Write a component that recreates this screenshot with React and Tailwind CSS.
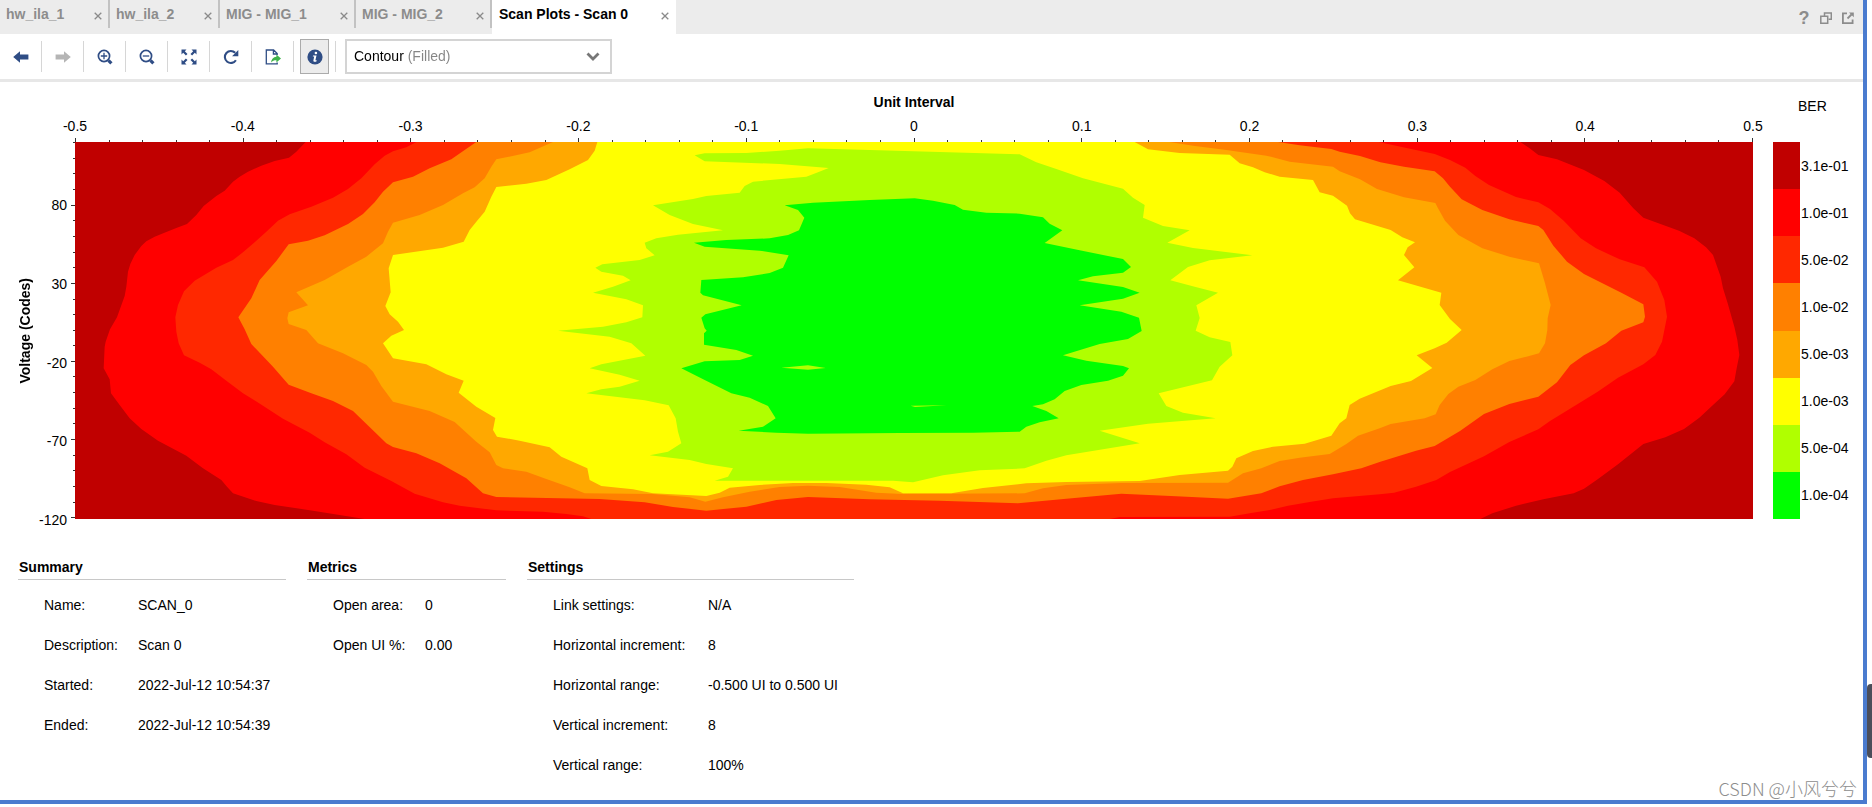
import React from "react";

const X_LABELS = ["-0.5", "-0.4", "-0.3", "-0.2", "-0.1", "0", "0.1", "0.2", "0.3", "0.4", "0.5"];
const Y_LABELS = ["80", "30", "-20", "-70", "-120"];

const LEGEND = [
  { label: "3.1e-01", color: "bg-[#c00000]" },
  { label: "1.0e-01", color: "bg-[#ff0000]" },
  { label: "5.0e-02", color: "bg-[#ff2800]" },
  { label: "1.0e-02", color: "bg-[#ff8000]" },
  { label: "5.0e-03", color: "bg-[#ffa800]" },
  { label: "1.0e-03", color: "bg-[#ffff00]" },
  { label: "5.0e-04", color: "bg-[#b0ff00]" },
  { label: "1.0e-04", color: "bg-[#00ff00]" },
];

// Contour outlines, from the outermost BER level to the innermost.
const CONTOURS = [
  {
    color: "#ff0000",
    points:
      "692,0 664,29 642,47 599,57 559,71 519,89 494,104 474,119 449,146 424,162 386,192 364,219 336,246 304,258 274,270 239,284 214,298 199,312 179,339 166,366 159,389 154,434 149,462 126,526 105,562 92,599 89,614 86,679 104,712 108,754 134,789 164,829 199,861 249,896 334,941 384,979 439,1014 456,1034 474,1054 544,1077 599,1089 714,1106 869,1131 4216,1131 4252,1114 4323,1091 4405,1072 4496,1054 4527,1040 4568,1012 4629,967 4705,906 4771,886 4827,861 4873,827 4914,789 4949,757 4978,718 4985,679 4993,639 4987,594 4978,554 4958,484 4944,439 4937,404 4914,339 4893,316 4858,289 4812,266 4705,227 4675,199 4634,152 4588,117 4527,84 4446,52 4390,39 4364,19 4336,0",
  },
  {
    color: "#ff2800",
    points:
      "1024,0 994,16 954,28 929,41 899,67 859,109 819,141 774,167 709,194 644,217 609,236 574,269 539,301 504,331 474,354 424,377 359,416 327,448 309,489 301,526 304,569 311,604 327,640 374,662 409,682 454,716 504,754 564,791 624,830 704,872 749,901 814,937 869,977 949,1017 1019,1055 1104,1081 1154,1091 1264,1105 1404,1109 1474,1116 1524,1123 1549,1131 3104,1131 3134,1125 3464,1124 3524,1114 3584,1104 3639,1091 3704,1080 3774,1069 3914,1057 3957,1052 4023,1034 4084,1014 4125,990 4227,943 4303,900 4390,862 4425,837 4507,787 4568,749 4629,707 4705,667 4741,639 4761,599 4776,524 4768,474 4746,419 4708,376 4634,352 4563,319 4517,289 4466,236 4425,201 4390,181 4323,165 4242,129 4201,102 4171,77 4125,54 4079,36 3977,14 3911,0",
  },
  {
    color: "#ff8000",
    points:
      "1204,0 1169,24 1129,52 1064,79 1014,104 954,121 924,149 899,181 864,216 819,246 749,280 699,296 641,307 604,357 554,414 529,469 490,526 509,562 529,606 594,674 641,728 709,754 774,777 834,807 869,841 934,904 954,915 1024,934 1094,964 1174,1009 1224,1054 1264,1065 1574,1071 1709,1081 1794,1095 1894,1106 2014,1094 2104,1074 2199,1065 2384,1072 2594,1076 2829,1084 2974,1070 3139,1055 3304,1063 3459,1070 3559,1054 3614,1033 3684,1014 3774,997 3859,979 3916,959 4023,926 4079,912 4155,867 4227,816 4303,786 4390,764 4446,721 4486,669 4527,640 4593,604 4639,566 4705,541 4710,524 4705,487 4639,452 4527,396 4476,359 4435,311 4405,264 4390,252 4303,232 4222,204 4160,172 4125,134 4104,109 4079,88 3987,74 3916,61 3855,42 3794,29 3769,21 3674,10 3609,0",
  },
  {
    color: "#ffa800",
    points:
      "1434,0 1364,31 1264,52 1249,74 1229,109 1199,136 1164,154 1104,189 1034,219 954,242 939,269 924,304 874,344 819,374 749,414 664,451 699,490 641,511 637,529 641,546 694,564 729,604 804,634 874,669 894,689 919,732 954,779 1064,807 1139,840 1204,899 1244,931 1264,969 1284,979 1354,989 1414,1011 1484,1036 1529,1054 1734,1056 1844,1066 1891,1079 1944,1066 2024,1049 2114,1035 2199,1031 2294,1035 2404,1052 2484,1056 2849,1054 2904,1039 2974,1029 3139,1023 3459,1022 3504,994 3559,979 3614,957 3674,947 3764,936 3814,906 3849,881 3914,859 3947,846 4049,829 4082,817 4094,789 4120,756 4150,734 4201,714 4252,682 4303,657 4354,644 4392,634 4410,604 4417,564 4418,529 4427,489 4410,424 4392,364 4303,344 4222,319 4150,279 4110,236 4089,199 4081,183 3987,166 3906,141 3855,112 3794,88 3774,74 3644,59 3574,41 3454,24 3354,11 3284,0",
  },
  {
    color: "#ffff00",
    points:
      "1567,0 1559,26 1539,54 1484,82 1414,114 1354,125 1264,135 1249,164 1229,209 1204,239 1184,264 1166,299 1104,317 954,339 941,379 947,451 931,492 944,517 969,539 987,564 949,581 924,604 954,649 1054,667 1114,697 1166,716 1151,752 1204,794 1261,828 1254,864 1266,884 1334,896 1424,916 1459,944 1537,979 1544,1014 1579,1032 1674,1042 1734,1054 1894,1062 1934,1052 1964,1037 2054,1029 2154,1023 2254,1023 2374,1028 2444,1036 2484,1054 2629,1054 2724,1038 2854,1024 2974,1020 3194,1017 3314,999 3459,986 3472,974 3484,949 3534,927 3594,914 3689,905 3769,881 3794,844 3814,829 3824,789 3854,770 3947,732 4008,717 4072,678 4025,640 4079,619 4115,602 4160,564 4125,531 4094,489 4099,452 3969,415 4018,376 3987,339 3998,316 4020,301 3982,286 3947,264 3840,232 3825,214 3816,191 3774,161 3734,151 3714,114 3614,104 3569,91 3534,76 3494,64 3464,38 3314,33 3219,22 3179,0",
  },
  {
    color: "#b0ff00",
    points:
      "1859,40 1889,34 2014,33 2114,26 2199,19 2384,24 2594,30 2834,37 2884,61 2944,81 3024,109 3144,140 3174,167 3209,189 3204,227 3264,252 3344,265 3277,302 3354,318 3532,340 3404,355 3339,375 3286,415 3359,434 3429,452 3364,490 3374,528 3362,566 3404,586 3466,600 3472,640 3434,674 3411,715 3251,754 3274,792 3324,812 3422,829 3219,845 3074,866 3194,904 2974,940 2914,956 2849,979 2714,985 2604,1000 2514,1021 2454,1016 1919,1016 1959,1004 1974,979 1894,966 1844,954 1724,940 1779,929 1819,904 1809,869 1802,829 1781,790 1709,775 1534,754 1579,742 1634,734 1694,716 1634,698 1544,679 1579,667 1711,641 1669,604 1604,584 1449,566 1584,554 1654,541 1702,526 1704,490 1654,472 1554,452 1614,434 1667,415 1644,401 1579,389 1561,377 1582,367 1694,354 1739,340 1714,319 1709,302 1744,289 1809,278 1944,265 1854,246 1784,219 1734,190 1854,171 1894,162 1994,152 2009,132 2034,119 2194,104 2229,91 2261,78 2114,66 1889,58",
  },
  {
    color: "#00ff00",
    points:
      "2129,190 2214,182 2384,174 2519,169 2574,176 2639,189 2664,203 2734,212 2834,215 2904,226 2924,245 2962,265 2909,303 3014,325 3144,351 3168,375 3144,392 3054,403 3009,415 3144,435 3194,452 3144,470 3014,490 3139,509 3192,527 3200,567 3159,591 3074,606 2964,640 3034,656 3144,672 3162,679 3144,701 3099,716 3019,729 2969,747 2939,772 2904,787 2872,792 2914,807 2951,829 2894,841 2854,854 2834,869 2694,872 2474,873 2199,875 2104,872 1991,866 2064,854 2102,829 2079,792 2024,767 1969,754 1889,714 1819,679 1889,658 1994,654 2034,641 1984,624 1887,608 1887,574 1895,566 1889,559 1879,527 1891,517 2000,490 1884,460 1876,452 1879,414 2004,406 2084,393 2124,377 2141,340 2054,326 1889,314 1857,302 1954,294 2084,289 2139,279 2172,265 2188,227 2169,204",
  },
  { color: "#b0ff00", points: "2119,677 2199,670 2252,678 2199,683" },
  { color: "#b0ff00", points: "2507,791 2614,790 2520,795" },
];

const SECTIONS = [
  {
    title: "Summary",
    width: "w-[268px]",
    columns: "grid-cols-[94px_1fr]",
    rows: [
      ["Name:", "SCAN_0"],
      ["Description:", "Scan 0"],
      ["Started:", "2022-Jul-12 10:54:37"],
      ["Ended:", "2022-Jul-12 10:54:39"],
    ],
  },
  {
    title: "Metrics",
    width: "w-[199px]",
    columns: "grid-cols-[92px_1fr]",
    rows: [
      ["Open area:", "0"],
      ["Open UI %:", "0.00"],
    ],
  },
  {
    title: "Settings",
    width: "w-[327px]",
    columns: "grid-cols-[155px_1fr]",
    rows: [
      ["Link settings:", "N/A"],
      ["Horizontal increment:", "8"],
      ["Horizontal range:", "-0.500 UI to 0.500 UI"],
      ["Vertical increment:", "8"],
      ["Vertical range:", "100%"],
    ],
  },
];

const TABS = [
  { label: "hw_ila_1", width: "w-[110px]" },
  { label: "hw_ila_2", width: "w-[110px]" },
  { label: "MIG - MIG_1", width: "w-[136px]" },
  { label: "MIG - MIG_2", width: "w-[136px]" },
];

function CloseIcon() {
  return (
    <svg className="h-2 w-2" viewBox="0 0 8 8" fill="none" stroke="#8a8a8a" strokeWidth="1.3">
      <path d="M.7.7l6.6 6.6M7.3.7L.7 7.3" />
    </svg>
  );
}

function Tab({ label, width, active }) {
  return (
    <div
      className={
        active
          ? "flex h-[34px] w-[184px] items-start justify-between bg-white pl-[7px] pr-[7px] text-black"
          : `flex h-7 items-start justify-between border-r-2 border-[#c2c2c2] pl-[6px] pr-[6px] text-[#8c8c8c] ${width}`
      }
    >
      <button type="button" role="tab" aria-selected={!!active} className="h-7 whitespace-nowrap font-bold">
        {label}
      </button>
      <button type="button" aria-label={`Close ${label}`} className="flex h-8 items-center">
        <CloseIcon />
      </button>
    </div>
  );
}

function ToolButton({ label, children, disabled }) {
  return (
    <div className="flex h-[31px] w-[42px] items-center justify-center border-r border-[#d6d6d6]">
      <button type="button" aria-label={label} disabled={disabled} className="flex h-7 w-7 items-center justify-center">
        {children}
      </button>
    </div>
  );
}

const BLUE = "#2f4d85";

function Zoom({ plus }) {
  return (
    <svg className="h-4 w-4" viewBox="0 0 16 16" fill="none" stroke={BLUE}>
      <circle cx="7" cy="7" r="5.6" strokeWidth="1.7" />
      <path d={plus ? "M3.8 7h6.4M7 3.8v6.4" : "M3.8 7h6.4"} strokeWidth="1.3" />
      <path d="M11.4 11.4l3 3" strokeWidth="3.2" />
    </svg>
  );
}

function Toolbar() {
  return (
    <div className="flex h-12 items-start border-b-[3px] border-[#e7e7e7] pt-[5px]">
      <div className="flex h-[35px] items-center">
        <ToolButton label="Back">
          <svg className="h-4 w-4" viewBox="0 0 16 16">
            <path d="M.2 8L7 2.2v3.3h8.4v5H7v3.3z" fill={BLUE} />
          </svg>
        </ToolButton>
        <ToolButton label="Forward" disabled>
          <svg className="h-4 w-4" viewBox="0 0 16 16">
            <path d="M15.8 8L9 2.2v3.3H.6v5H9v3.3z" fill="#b5b5b5" />
          </svg>
        </ToolButton>
        <ToolButton label="Zoom in">
          <Zoom plus />
        </ToolButton>
        <ToolButton label="Zoom out">
          <Zoom />
        </ToolButton>
        <ToolButton label="Zoom fit">
          <svg className="h-4 w-4" viewBox="0 0 16 16" fill={BLUE}>
            <path d="M.5.5h5L3.8 2.200l2.700 2.700-1.600 1.600-2.700-2.700L.5 5.500z" />
            <path d="M15.500.5h-5l1.700 1.700-2.700 2.700 1.600 1.600 2.700-2.700 1.700 1.700z" />
            <path d="M.5 15.500h5l-1.700-1.700 2.700-2.700-1.600-1.600-2.700 2.700-1.700-1.700z" />
            <path d="M15.500 15.500h-5l1.700-1.700-2.700-2.700 1.600-1.600 2.700 2.700 1.700-1.700z" />
          </svg>
        </ToolButton>
        <ToolButton label="Refresh">
          <svg className="h-4 w-4" viewBox="0 0 16 16">
            <path d="M12.9 11.2A6 6 0 1 1 12.2 3.8" fill="none" stroke={BLUE} strokeWidth="2.1" />
            <path d="M15.3 1v6.2H9.1z" fill={BLUE} />
          </svg>
        </ToolButton>
        <ToolButton label="Export">
          <svg className="h-4 w-4" viewBox="0 0 16 16">
            <path d="M12.2 6V4.600L8.600 1H1.300v13.800h10.900v-1.200M8.400 1v4h3.800" fill="none" stroke={BLUE} strokeWidth="1.3" />
            <path d="M16 9.400l-4.600-3.900v2.300C8.300 8 6.400 10 6 13.600c1.500-1.900 3-2.400 5.400-2.400v2.300z" fill="#3fb34a" />
          </svg>
        </ToolButton>
        <div className="flex h-[31px] w-[42px] items-center justify-center border-r border-[#d6d6d6]">
          <button
            type="button"
            aria-label="Show details"
            aria-pressed="true"
            className="flex h-[35px] w-[29px] shrink-0 items-center justify-center border border-[#ababab] bg-[#ececec]"
          >
            <svg className="h-4 w-4" viewBox="0 0 16 16">
              <circle cx="8" cy="8" r="7.6" fill={BLUE} />
              <circle cx="8.9" cy="4" r="1.3" fill="#fff" />
              <path d="M6 6.5h3.5L8.400 11.300h1.300l-.3 1.200c-1.700.5-3.300.3-3-1.100L7.200 7.600H5.800z" fill="#fff" />
            </svg>
          </button>
        </div>
      </div>
      <div className="relative ml-[9px] w-[267px]">
        <select
          aria-label="Plot type"
          className="h-[35px] w-full appearance-none border-2 border-[#d4d4d4] bg-[linear-gradient(90deg,#000_57px,#858585_57px)] bg-clip-text pb-0.5 pl-[7px] text-sm text-transparent"
        >
          <option>Contour (Filled)</option>
        </select>
        <svg
          className="pointer-events-none absolute right-3 top-[13px] h-[10px] w-[14px]"
          viewBox="0 0 14 10"
          fill="none"
          stroke="#777"
          strokeWidth="2.8"
        >
          <path d="M1.5 1.5L7 7l5.5-5.5" />
        </svg>
      </div>
    </div>
  );
}

function TopTicks() {
  return (
    <svg className="block h-1 w-full" viewBox="0 0 1678 4" preserveAspectRatio="none" shapeRendering="crispEdges">
      {Array.from({ length: 51 }, (_, i) => {
        const tall = i % 5 === 0;
        return <rect key={i} x={Math.round(i * 33.54)} y={tall ? 0 : 2} width="1" height={tall ? 4 : 2} fill="#333" />;
      })}
    </svg>
  );
}

function SideTicks() {
  return (
    <svg className="block h-full w-1" viewBox="0 0 4 378" preserveAspectRatio="none" shapeRendering="crispEdges">
      {Array.from({ length: 25 }, (_, i) => {
        const long = i % 5 === 4;
        return <rect key={i} x={long ? 0 : 2} y={Math.round(i * 15.68)} width={long ? 4 : 2} height="1" fill="#333" />;
      })}
    </svg>
  );
}

function Chart() {
  return (
    <section className="grid grid-cols-[75px_1fr_110px] pt-[10px]">
      <div />
      <div>
        <h2 className="h-5 text-center font-bold leading-5">Unit Interval</h2>
        <div className="mb-0.5 mt-1 flex h-5 justify-between leading-5">
          {X_LABELS.map((t) => (
            <span key={t} className="flex w-0 justify-center whitespace-nowrap">
              {t}
            </span>
          ))}
        </div>
        <TopTicks />
      </div>
      <div className="pl-[45px] pt-1 leading-5">BER</div>

      <div className="flex h-[377px] items-stretch">
        <div className="flex w-[34px] items-center justify-center pl-4">
          <span className="rotate-180 whitespace-nowrap font-bold leading-4 [writing-mode:vertical-rl]">Voltage (Codes)</span>
        </div>
        <div className="-mb-px flex flex-1 flex-col justify-between pr-1 pt-[63px]">
          {Y_LABELS.map((t) => (
            <span key={t} className="flex h-0 items-center justify-end">
              {t}
            </span>
          ))}
        </div>
        <SideTicks />
      </div>
      <svg className="block h-[377px] w-full" viewBox="0 0 5034 1131" preserveAspectRatio="none" role="img" aria-label="Eye scan contour">
        <rect width="5034" height="1131" fill="#c00000" />
        {CONTOURS.map((c, i) => (
          <polygon key={i} points={c.points} fill={c.color} />
        ))}
      </svg>
      <ul className="flex h-[377px] flex-col pl-5">
        {LEGEND.map((l) => (
          <li key={l.label} className="flex flex-1 items-stretch">
            <span className={`w-[27px] ${l.color}`} />
            <span className="flex items-center pl-px">{l.label}</span>
          </li>
        ))}
      </ul>
    </section>
  );
}

function Details() {
  return (
    <div className="flex gap-[21px] pl-[18px] pt-[38px]">
      {SECTIONS.map((s) => (
        <section key={s.title} className={s.width}>
          <h2 className="h-[23px] border-b border-[#c8c8c8] pl-px font-bold leading-5">{s.title}</h2>
          <dl className="pl-[26px] pt-[5px]">
            {s.rows.map(([k, v]) => (
              <div key={k} className={`grid h-10 items-center whitespace-nowrap ${s.columns}`}>
                <dt>{k}</dt>
                <dd>{v}</dd>
              </div>
            ))}
          </dl>
        </section>
      ))}
    </div>
  );
}

export default function App() {
  return (
    <div className="relative flex min-h-screen bg-white pb-[3px] pr-[5px] font-['Liberation_Sans',Arial,sans-serif] text-sm text-black">
      <main className="relative min-w-0 flex-1 border-b-4 border-r-4 border-[#4a7bcf]">
        <header className="flex h-[34px] items-start justify-between bg-[#ececec]">
          <div role="tablist" className="flex items-start">
            {TABS.map((t) => (
              <Tab key={t.label} {...t} />
            ))}
            <Tab label="Scan Plots - Scan 0" active />
          </div>
          <div className="flex items-center gap-[10px] pr-[9px] pt-3">
            <button type="button" aria-label="Help" className="flex h-3 w-3 items-center justify-center text-lg font-bold text-[#8c8c8c]">
              ?
            </button>
            <button type="button" aria-label="Restore">
              <svg className="h-3 w-3" viewBox="0 0 12 12" fill="none" stroke="#8c8c8c" strokeWidth="1.5">
                <path d="M4.500 4V1h6.800v6.300H8.500" />
                <path d="M.8 4.300h6.900v6.900H.8z" />
              </svg>
            </button>
            <button type="button" aria-label="Float">
              <svg className="h-3 w-3" viewBox="0 0 12 12" fill="none" stroke="#8c8c8c" strokeWidth="1.8">
                <path d="M5 1.300H.9v9.900h9.700V7.500" />
                <path d="M5.500 6.500L9.500 2.500" />
                <path d="M7 .4h4.800v4.800z" fill="#8c8c8c" stroke="none" />
              </svg>
            </button>
          </div>
        </header>
        <Toolbar />
        <Chart />
        <Details />
        <div className="absolute bottom-0 right-[6px] font-['Noto_Sans_CJK_SC',sans-serif] text-lg font-light leading-6 text-[#8d8d8d]">
          CSDN @小风兮兮
        </div>
      </main>
      <div className="absolute right-0 top-[684px] h-[74px] w-[5px] rounded-l bg-[#4b4e5a]" />
    </div>
  );
}
